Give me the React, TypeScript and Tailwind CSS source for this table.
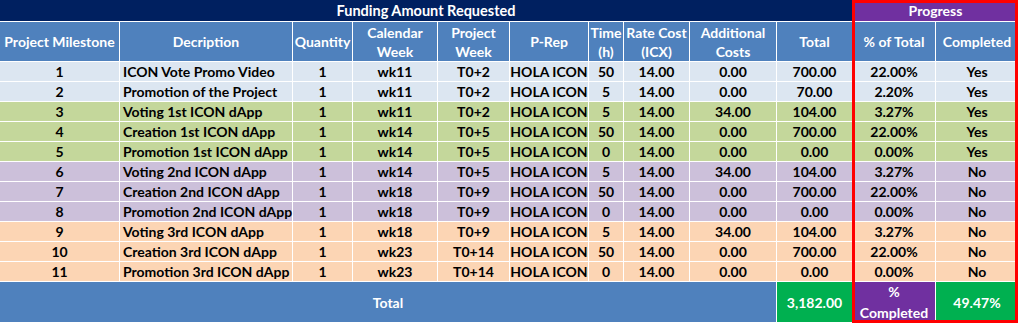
import React from "react";

type Row = string[];

const rows: { bg: string; cells: Row }[] = [
  { bg: "bg-[#DCE6F1]", cells: ["1", "ICON Vote Promo Video", "1", "wk11", "T0+2", "HOLA ICON", "50", "14.00", "0.00", "700.00", "22.00%", "Yes"] },
  { bg: "bg-[#DCE6F1]", cells: ["2", "Promotion of the Project", "1", "wk11", "T0+2", "HOLA ICON", "5", "14.00", "0.00", "70.00", "2.20%", "Yes"] },
  { bg: "bg-[#C4D79B]", cells: ["3", "Voting 1st ICON dApp", "1", "wk11", "T0+2", "HOLA ICON", "5", "14.00", "34.00", "104.00", "3.27%", "Yes"] },
  { bg: "bg-[#C4D79B]", cells: ["4", "Creation 1st ICON dApp", "1", "wk14", "T0+5", "HOLA ICON", "50", "14.00", "0.00", "700.00", "22.00%", "Yes"] },
  { bg: "bg-[#C4D79B]", cells: ["5", "Promotion 1st ICON dApp", "1", "wk14", "T0+5", "HOLA ICON", "0", "14.00", "0.00", "0.00", "0.00%", "Yes"] },
  { bg: "bg-[#CCC0DA]", cells: ["6", "Voting 2nd ICON dApp", "1", "wk14", "T0+5", "HOLA ICON", "5", "14.00", "34.00", "104.00", "3.27%", "No"] },
  { bg: "bg-[#CCC0DA]", cells: ["7", "Creation 2nd ICON dApp", "1", "wk18", "T0+9", "HOLA ICON", "50", "14.00", "0.00", "700.00", "22.00%", "No"] },
  { bg: "bg-[#CCC0DA]", cells: ["8", "Promotion 2nd ICON dApp", "1", "wk18", "T0+9", "HOLA ICON", "0", "14.00", "0.00", "0.00", "0.00%", "No"] },
  { bg: "bg-[#FCD5B4]", cells: ["9", "Voting 3rd ICON dApp", "1", "wk18", "T0+9", "HOLA ICON", "5", "14.00", "34.00", "104.00", "3.27%", "No"] },
  { bg: "bg-[#FCD5B4]", cells: ["10", "Creation 3rd ICON dApp", "1", "wk23", "T0+14", "HOLA ICON", "50", "14.00", "0.00", "700.00", "22.00%", "No"] },
  { bg: "bg-[#FCD5B4]", cells: ["11", "Promotion 3rd ICON dApp", "1", "wk23", "T0+14", "HOLA ICON", "0", "14.00", "0.00", "0.00", "0.00%", "No"] },
];

const headers: string[][] = [
  ["Project Milestone"],
  ["Decription"],
  ["Quantity"],
  ["Calendar", "Week"],
  ["Project", "Week"],
  ["P-Rep"],
  ["Time", "(h)"],
  ["Rate Cost", "(ICX)"],
  ["Additional", "Costs"],
  ["Total"],
  ["% of Total"],
  ["Completed"],
];

export default function App() {
  return (
    <div className="relative w-[1019px] h-[324px] bg-white font-['Lato',sans-serif] font-bold text-[14px]">
      <div className="grid grid-cols-[119px_172px_59px_84px_71px_78px_34px_65px_86px_75px_82px_82px] grid-rows-[21px_39px_repeat(11,19px)_40px] gap-px bg-white w-[1018px]">
        <div className="col-span-10 bg-[#002060] text-white text-[14.5px] flex items-center justify-center">
          Funding Amount Requested
        </div>
        <div className="col-span-2 bg-[#7030A0] text-white flex items-center justify-center">
          Progress
        </div>
        {headers.map((h, i) => (
          <div
            key={i}
            className="bg-[#4F81BD] text-white flex flex-col items-center justify-center leading-[19px] whitespace-nowrap"
          >
            {h.map((l, j) => (
              <span key={j}>{l}</span>
            ))}
          </div>
        ))}
        {rows.map((r, ri) =>
          r.cells.map((c, ci) => (
            <div
              key={`${ri}-${ci}`}
              className={`${r.bg} text-black flex items-center whitespace-nowrap leading-none ${
                ci === 1 ? "justify-start pl-[3px]" : "justify-center"
              }`}
            >
              {c}
            </div>
          ))
        )}
        <div className="col-span-9 bg-[#4F81BD] text-white flex items-center justify-center">
          Total
        </div>
        <div className="bg-[#00B050] text-white flex items-center justify-center">3,182.00</div>
        <div className="bg-[#7030A0] text-white flex flex-col items-center justify-center leading-[21px]">
          <span>%</span>
          <span>Completed</span>
        </div>
        <div className="bg-[#00B050] text-white flex items-center justify-center">49.47%</div>
      </div>
      <div className="absolute left-[852px] top-0 w-[166px] h-[323px] border-[3px] border-[#FF0000] pointer-events-none" />
    </div>
  );
}
